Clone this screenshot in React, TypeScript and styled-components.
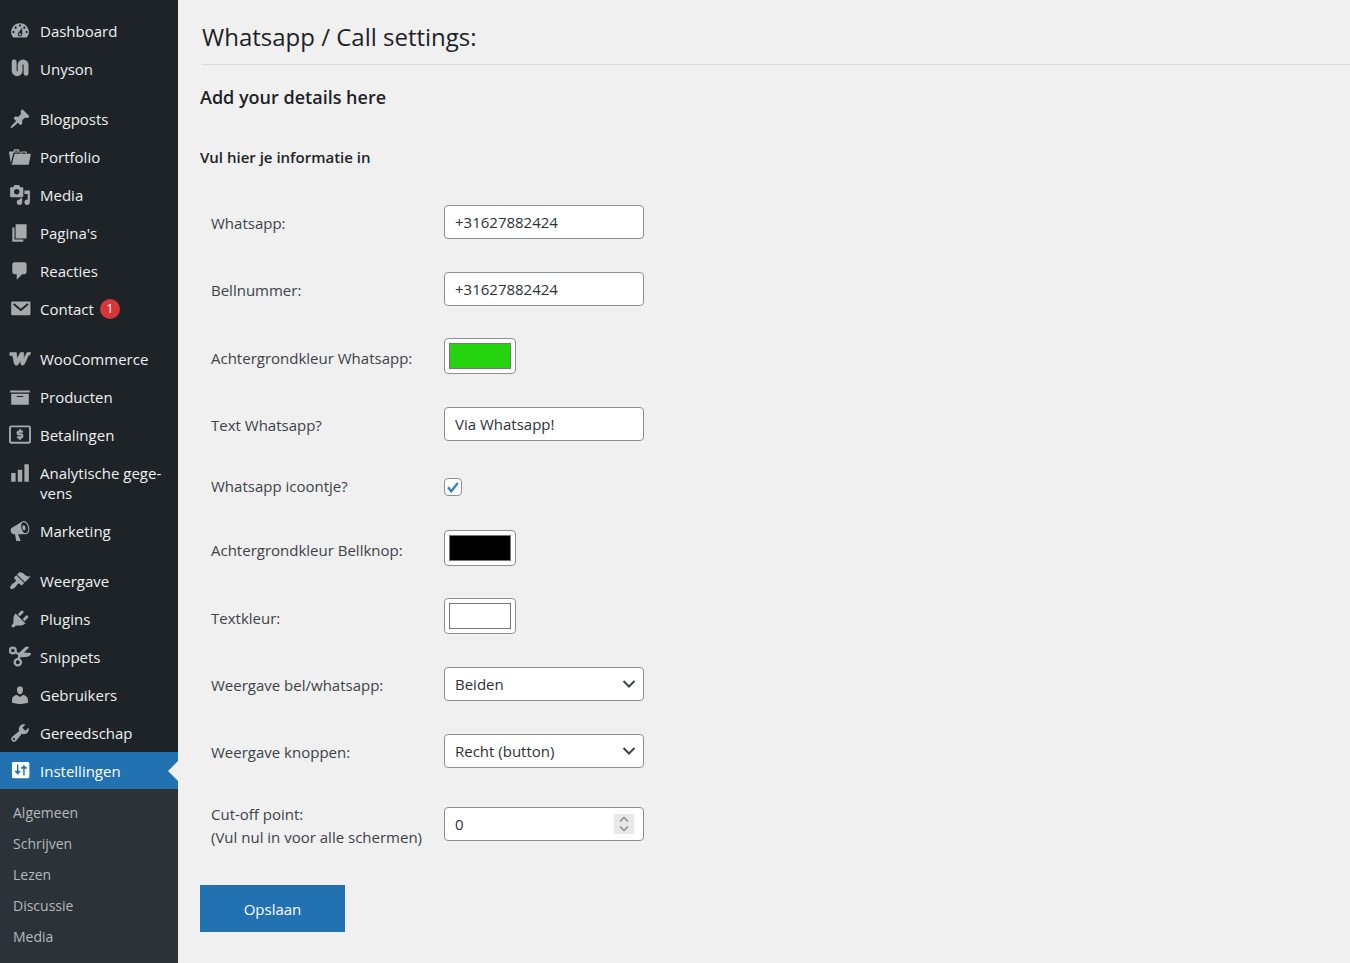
import React from "react";
import styled, { createGlobalStyle, css } from "styled-components";

const GlobalStyle = createGlobalStyle`
  *, *::before, *::after { box-sizing: border-box; }
  body {
    margin: 0;
    background: #f0f0f0;
    color: #3c434a;
    font-family: "Open Sans", "Noto Sans", sans-serif;
    font-size: 15px;
    line-height: 24px;
  }
  button, input, select { font: inherit; color: inherit; }
`;

const Shell = styled.div`
  display: flex;
  min-height: 100vh;
`;

const Sidebar = styled.nav`
  display: flex;
  flex-direction: column;
  flex: 0 0 178px;
  padding-top: 12px;
  background: #1d2327;
`;

const MenuGroup = styled.ul`
  list-style: none;
  margin: 0;
  padding: 0;

  & + & { margin-top: 12px; }
`;

const MenuLink = styled.a<{ $active?: boolean }>`
  position: relative;
  display: flex;
  gap: 9px;
  min-height: ${({ $active }) => ($active ? 37 : 38)}px;
  padding: 9px 8px 9px 9px;
  color: #f0f0f1;
  line-height: 20px;
  text-decoration: none;

  ${({ $active }) =>
    $active &&
    css`
      padding: 9px 8px 8px 9px;
      background: #2271b1;
      color: #fff;

      &::after {
        content: "";
        position: absolute;
        top: 50%;
        right: 0;
        margin-top: -10px;
        border: 10px solid transparent;
        border-left-width: 0;
        border-right-color: #f0f0f0;
      }
    `}
`;

const MenuIcon = styled.svg<{ $active?: boolean }>`
  flex: none;
  width: 22px;
  height: 22px;
  margin: -1px 0;
  fill: ${({ $active }) => ($active ? "#fff" : "#a7aaad")};
`;

const MenuLabel = styled.span`
  display: flex;
  align-items: flex-start;
  gap: 6px;
`;

const Badge = styled.span`
  width: 20px;
  border-radius: 10px;
  background: #d63638;
  color: #fff;
  font-size: 12px;
  text-align: center;
`;

const SubMenu = styled.ul`
  flex: 1;
  list-style: none;
  margin: 0;
  padding: 8px 0 4px;
  background: #2c3338;
`;

const SubLink = styled.a`
  display: block;
  padding: 5px 13px;
  color: #b4b9be;
  font-size: 14px;
  line-height: 21px;
  text-decoration: none;
`;

const Main = styled.main`
  flex: 1;
  min-width: 0;
  padding: 16px 0 31px 22px;
`;

const PageTitle = styled.h1`
  margin: 0 0 0 2px;
  padding: 4px 0 10px;
  border-bottom: 1px solid #dcdcde;
  color: #1d2327;
  font-size: 24px;
  font-weight: 400;
  line-height: 34px;
`;

const SectionTitle = styled.h2`
  margin: 20px 0 0;
  color: #1d2327;
  font-size: 18px;
  font-weight: 600;
  line-height: 24px;
`;

const SectionNote = styled.h3`
  margin: 36px 0 19px;
  color: #1d2327;
  font-size: 15px;
  font-weight: 600;
  line-height: 24px;
`;

const Label = styled.label`
  padding-top: 4px;
  line-height: 23px;
`;

const rowSizes = {
  text: css`min-height: 67px;`,
  color: css`min-height: 68px;`,
  check: css`
    min-height: 57px;
    padding-bottom: 13px;
    ${Label} { padding-top: 0; }
  `,
};

const Row = styled.div<{ $kind?: keyof typeof rowSizes }>`
  display: grid;
  grid-template-columns: 233px 1fr;
  align-items: center;
  padding: 15px 0 15px 11px;
  ${({ $kind = "text" }) => rowSizes[$kind]}
`;

const fieldBox = css`
  border: 1px solid #8c8f94;
  border-radius: 4px;
  background: #fff;
  color: #2c3338;
`;

const TextField = styled.input`
  ${fieldBox}
  display: block;
  width: 200px;
  height: 34px;
  padding: 0 10px;
`;

const ColorField = styled.input`
  ${fieldBox}
  display: block;
  width: 72px;
  height: 36px;
  padding: 0;

  &::-webkit-color-swatch-wrapper { padding: 4px; }
  &::-webkit-color-swatch { border: 1px solid #777; border-radius: 0; }
`;

const CheckWrap = styled.span`
  position: relative;
  width: 18px;
  height: 18px;

  svg {
    position: absolute;
    inset: 0;
    pointer-events: none;
  }
`;

const CheckField = styled.input`
  ${fieldBox}
  appearance: none;
  display: block;
  width: 18px;
  height: 18px;
  margin: 0;

  &:not(:checked) + svg { display: none; }
`;

const FieldWrap = styled.span`
  position: relative;
  width: 200px;
`;

const SelectField = styled.select`
  ${fieldBox}
  appearance: none;
  display: block;
  width: 200px;
  height: 34px;
  padding: 0 28px 0 10px;
`;

const NumberField = styled(TextField)`
  &::-webkit-inner-spin-button { opacity: 0; }
`;

const Chevron = styled.svg`
  position: absolute;
  top: 10px;
  right: 8px;
  width: 14px;
  height: 14px;
  pointer-events: none;
`;

const Stepper = styled.svg`
  position: absolute;
  top: 7px;
  right: 10px;
  width: 20px;
  height: 20px;
  background: #e9e9ea;
  pointer-events: none;
`;

const SaveButton = styled.button`
  width: 145px;
  height: 47px;
  margin-top: 21px;
  border: 0;
  background: #2271b1;
  color: #fff;
  cursor: pointer;
`;

const icons: Record<string, React.ReactNode> = {
  dashboard: (
    <path d="M3.76 16h12.48A7.998 7.998 0 0 0 10 3a7.998 7.998 0 0 0-6.24 13zM10 4c.55 0 1 .45 1 1s-.45 1-1 1-1-.45-1-1 .45-1 1-1zM6 6c.55 0 1 .45 1 1s-.45 1-1 1-1-.45-1-1 .45-1 1-1zm8 0c.55 0 1 .45 1 1s-.45 1-1 1-1-.45-1-1 .45-1 1-1zm-5.37 5.55L12 7v6c0 1.1-.9 2-2 2s-2-.9-2-2c0-.57.24-1.08.63-1.45zM4 10c.55 0 1 .45 1 1s-.45 1-1 1-1-.45-1-1 .45-1 1-1zm12 0c.55 0 1 .45 1 1s-.45 1-1 1-1-.45-1-1 .45-1 1-1zm-5 3c0-.55-.45-1-1-1s-1 .45-1 1 .45 1 1 1 1-.45 1-1z" />
  ),
  unyson: (
    <path
      d="M4.7 3.5V11.6a2.7 2.7 0 0 0 5.4 0V6.2a2.7 2.7 0 0 1 5.4 0V14"
      fill="none"
      stroke="#a7aaad"
      strokeWidth="4.4"
      strokeLinecap="round"
    />
  ),
  pin: (
    <path d="M10.44 3.02l1.82-1.82 6.36 6.35-1.83 1.82c-1.05-.68-2.48-.57-3.41.36l-.75.75c-.92.93-1.04 2.35-.35 3.41l-1.83 1.82-2.41-2.41-2.8 2.79c-.42.42-3.38 2.71-3.8 2.29s1.86-3.39 2.28-3.81l2.79-2.79L4.1 9.36l1.83-1.82c1.05.69 2.48.57 3.4-.36l.75-.75c.93-.92 1.05-2.35.36-3.41z" />
  ),
  portfolio: (
    <path d="M4 5H.78c-.37 0-.74.32-.69.84l1.56 9.99S3.5 8.47 3.86 6.7c.11-.53.61-.7.98-.7H10s-.7-2.08-.77-2.31C9.11 3.25 8.89 3 8.45 3H5.14c-.36 0-.7.23-.8.64C4.25 4.04 4 5 4 5zm4.88 0h-4s.42-1 .87-1h2.13c.48 0 1 1 1 1zM2.67 16.25c-.31.47-.76.75-1.26.75h15.73c.54 0 .92-.31 1.03-.83.44-2.19 1.68-8.44 1.68-8.44.07-.5-.3-.73-.62-.73H16V5.53c0-.16-.26-.53-.66-.53h-3.76c-.52 0-.87.58-.87.58L10 7H5.59c-.32 0-.63.19-.69.5 0 0-1.59 6.7-1.72 7.33-.07.37-.22.99-.51 1.42zM15.38 7H11s.58-1 1.13-1h2.29c.71 0 .96 1 .96 1z" />
  ),
  media: (
    <path d="M13 11V4c0-.55-.45-1-1-1h-1.67L9 1H5L3.67 3H2c-.55 0-1 .45-1 1v7c0 .55.45 1 1 1h10c.55 0 1-.45 1-1zM7 4.5c1.38 0 2.5 1.12 2.5 2.5S8.38 9.5 7 9.5 4.5 8.38 4.5 7 5.62 4.5 7 4.5zM14 6h5v10.5c0 1.38-1.12 2.5-2.5 2.5S14 17.88 14 16.5s1.12-2.5 2.5-2.5c.17 0 .34.02.5.05V9h-3V6zm-4 8.05V13h2v3.5c0 1.38-1.12 2.5-2.5 2.5S7 17.88 7 16.5 8.12 14 9.5 14c.17 0 .34.02.5.05z" />
  ),
  pages: <path d="M6 15V2h10v13H6zm-1 1h8v2H3V5h2v11z" />,
  comments: (
    <path d="M5 2h9c1.1 0 2 .9 2 2v7c0 1.1-.9 2-2 2h-2l-5 5v-5H5c-1.1 0-2-.9-2-2V4c0-1.1.9-2 2-2z" />
  ),
  mail: (
    <>
      <rect x="2" y="3.2" width="17.5" height="12.5" rx="1" />
      <path d="M4.3 5.5l6.45 5.4L17.2 5.5" fill="none" stroke="#1d2327" strokeWidth="1.7" />
    </>
  ),
  woo: (
    <path
      d="M0.8 4.2H6.6L7.4 9.8 10.4 4.2H13.2L13.6 9.6 16.4 4.2H19.8L18.9 6.4H17.8L14 14.6Q13.4 15.6 12.2 15.6 11 15.6 10.9 14.4L10.5 11.4 8.4 14.8Q7.8 15.6 6.6 15.6 5.2 15.6 4.9 14.4L3.3 6.8H0.8Z"
      stroke="#a7aaad"
      strokeWidth="0.6"
      strokeLinejoin="round"
    />
  ),
  archive: <path d="M19 4v2H1V4h18zM2 7h16v10H2V7zm11 3V9H7v1h6z" />,
  payments: (
    <>
      <rect x="0.9" y="2.2" width="18.2" height="14.8" rx="1" fill="none" stroke="#a7aaad" strokeWidth="1.7" />
      <path
        d="M12.7 6.9H9.2a1.3 1.3 0 0 0 0 2.6h1.6a1.3 1.3 0 0 1 0 2.6H7.3M10 4.8v2M10 12.2v2.2"
        fill="none"
        stroke="#a7aaad"
        strokeWidth="2"
      />
    </>
  ),
  chart: <path d="M18 18V2h-4v16h4zm-6 0V7H8v11h4zm-6 0v-8H2v8h4z" />,
  megaphone: (
    <path d="M18.15 5.94c.46 1.62.38 3.22-.02 4.48-.42 1.28-1.26 2.18-2.3 2.48-.16.06-.26.06-.4.06-.06.02-.12.02-.18.02-.06.02-.14.02-.22.02h-6.8l2.22 5.5c.02.14-.06.26-.14.34-.08.1-.24.16-.34.16H6.95c-.1 0-.26-.06-.34-.16-.08-.08-.16-.2-.14-.34l-1-5.5H4.25l-.02-.02c-.5.06-1.08-.18-1.54-.62s-.88-1.08-1.06-1.88c-.24-.8-.2-1.56-.02-2.2.18-.62.58-1.08 1.06-1.3l.02-.02 9-5.4c.1-.06.18-.1.24-.16.06-.04.14-.08.24-.12.16-.08.28-.12.5-.18 1.04-.3 2.24.1 3.22.98s1.84 2.24 2.26 3.86zm-2.58 5.98h-.02c.4-.1.74-.34 1.04-.7.58-.7.86-1.76.86-3.04 0-.64-.1-1.3-.28-1.98-.34-1.36-1.02-2.5-1.78-3.24s-1.68-1.1-2.46-.88c-.82.22-1.4.96-1.7 2-.32 1.04-.28 2.36.06 3.72.38 1.36 1 2.5 1.8 3.24.78.74 1.62 1.1 2.48.88zm-2.54-7.08c.22-.04.42-.02.62.04.38.16.76.48 1.02 1s.42 1.2.42 1.78c0 .3-.04.56-.12.8-.18.48-.44.84-.86.94-.34.1-.8-.06-1.14-.4s-.64-.86-.78-1.5c-.18-.62-.12-1.24.02-1.72s.48-.84.82-.94z" />
  ),
  brush: (
    <path d="M14.48 11.06L7.41 3.99l1.5-1.5c.5-.56 2.3-.47 3.51.32 1.21.8 1.43 1.28 2.91 2.1 1.18.64 2.45 1.26 4.45.85zm-.71.71L6.7 4.7 4.93 6.47c-.39.39-.39 1.02 0 1.41l1.06 1.06c.39.39.39 1.03 0 1.42-.6.6-1.43 1.11-2.21 1.69-.35.26-.7.53-1.01.84C1.43 14.23.4 16.08 1.4 17.07c.99 1 2.84-.03 4.18-1.36.31-.31.58-.66.85-1.02.57-.78 1.08-1.61 1.69-2.21.39-.39 1.02-.39 1.41 0l1.06 1.06c.39.39 1.02.39 1.41 0z" />
  ),
  plug: (
    <path d="M13.11 4.36L9.87 7.6 8 5.73l3.24-3.24c.35-.34 1.05-.2 1.56.32.52.51.66 1.21.31 1.55zm-8 1.77l.91-1.12 9.01 9.01-1.19.84c-.71.71-2.63 1.16-3.82 1.16H6.14L4.9 17.26c-.59.59-1.54.59-2.12 0-.59-.58-.59-1.53 0-2.12l1.24-1.24v-3.88c0-1.13.4-3.19 1.09-3.89zm7.26 3.97l3.24-3.24c.34-.35 1.04-.21 1.55.31.52.51.66 1.21.31 1.55l-3.24 3.25z" />
  ),
  scissors: (
    <>
      <g fill="none" stroke="#a7aaad" strokeWidth="2">
        <circle cx="3.5" cy="4.1" r="2.6" />
        <circle cx="8" cy="14.8" r="2.9" />
        <path d="M5.7 5.4l4 2.6M8.6 12.2L9.6 7.8" />
      </g>
      <path d="M8 7.2L14.8 1c1.2-1 2.6-.8 3.5.3L13.6 5.8l6.4.6c-.1 1.9-1.3 3.2-3 3.4L8.6 10.4z" />
    </>
  ),
  user: (
    <path d="M10 9.25c-2.27 0-2.73-3.44-2.73-3.44C7 4.02 7.82 2 9.97 2c2.16 0 2.98 2.02 2.71 3.81 0 0-.41 3.44-2.68 3.44zm0 2.57L12.72 10c2.39 0 4.52 2.33 4.52 4.53v2.49s-3.65 1.13-7.24 1.13c-3.65 0-7.24-1.13-7.24-1.13v-2.49c0-2.25 1.94-4.48 4.47-4.48z" />
  ),
  wrench: (
    <path d="M16.68 9.77c-1.34 1.34-3.3 1.67-4.95.99l-5.41 6.52c-.99.99-2.59.99-3.58 0s-.99-2.59 0-3.57l6.52-5.42c-.68-1.65-.35-3.61.99-4.95 1.28-1.28 3.12-1.62 4.72-1.06l-2.89 2.89 2.82 2.82 2.86-2.87c.53 1.58.18 3.39-1.08 4.65zM3.81 16.21c.4.39 1.04.39 1.43 0 .4-.4.4-1.04 0-1.43-.39-.4-1.03-.4-1.43 0-.39.39-.39 1.03 0 1.43z" />
  ),
  settings: (
    <>
      <rect x="2.7" y="1.8" width="15.8" height="14.9" rx="1.2" />
      <path
        d="M7.9 4.2v8.8M5.5 10.4h4.8M13.6 14V5.2M11 7.2h5.2"
        fill="none"
        stroke="#2271b1"
        strokeWidth="1.3"
      />
      <path d="M5.6 10.4h4.6L7.9 13.4zM11.2 7.2h4.8L13.6 4.6z" fill="#2271b1" />
    </>
  ),
};

type Item = { label: string; icon: string; badge?: number; active?: boolean };

const menu: Item[][] = [
  [
    { label: "Dashboard", icon: "dashboard" },
    { label: "Unyson", icon: "unyson" },
  ],
  [
    { label: "Blogposts", icon: "pin" },
    { label: "Portfolio", icon: "portfolio" },
    { label: "Media", icon: "media" },
    { label: "Pagina's", icon: "pages" },
    { label: "Reacties", icon: "comments" },
    { label: "Contact", icon: "mail", badge: 1 },
  ],
  [
    { label: "WooCommerce", icon: "woo" },
    { label: "Producten", icon: "archive" },
    { label: "Betalingen", icon: "payments" },
    { label: "Analytische gege\u00advens", icon: "chart" },
    { label: "Marketing", icon: "megaphone" },
  ],
  [
    { label: "Weergave", icon: "brush" },
    { label: "Plugins", icon: "plug" },
    { label: "Snippets", icon: "scissors" },
    { label: "Gebruikers", icon: "user" },
    { label: "Gereedschap", icon: "wrench" },
    { label: "Instellingen", icon: "settings", active: true },
  ],
];

const subMenu = ["Algemeen", "Schrijven", "Lezen", "Discussie", "Media"];

function Select({ id, options }: { id: string; options: string[] }) {
  return (
    <FieldWrap>
      <SelectField id={id}>
        {options.map((option) => (
          <option key={option}>{option}</option>
        ))}
      </SelectField>
      <Chevron viewBox="0 0 14 14" aria-hidden="true">
        <path d="M1.5 4l5.5 5.5L12.5 4" fill="none" stroke="#3c434a" strokeWidth="2" />
      </Chevron>
    </FieldWrap>
  );
}

export default function App() {
  return (
    <Shell lang="nl">
      <GlobalStyle />
      <Sidebar>
        {menu.map((group) => (
          <MenuGroup key={group[0].label}>
            {group.map(({ label, icon, badge, active }) => (
              <li key={label}>
                <MenuLink href="#" $active={active} aria-current={active ? "page" : undefined}>
                  <MenuIcon viewBox="0 0 20 20" $active={active} aria-hidden="true">
                    {icons[icon]}
                  </MenuIcon>
                  <MenuLabel>
                    {label}
                    {badge && <Badge>{badge}</Badge>}
                  </MenuLabel>
                </MenuLink>
              </li>
            ))}
          </MenuGroup>
        ))}
        <SubMenu>
          {subMenu.map((label) => (
            <li key={label}>
              <SubLink href="#">{label}</SubLink>
            </li>
          ))}
        </SubMenu>
      </Sidebar>
      <Main>
        <PageTitle>Whatsapp / Call settings:</PageTitle>
        <SectionTitle>Add your details here</SectionTitle>
        <SectionNote>Vul hier je informatie in</SectionNote>
        <form onSubmit={(event) => event.preventDefault()}>
          <Row>
            <Label htmlFor="whatsapp">Whatsapp:</Label>
            <TextField id="whatsapp" type="text" defaultValue="+31627882424" />
          </Row>
          <Row>
            <Label htmlFor="phone">Bellnummer:</Label>
            <TextField id="phone" type="text" defaultValue="+31627882424" />
          </Row>
          <Row $kind="color">
            <Label htmlFor="whatsapp-color">Achtergrondkleur Whatsapp:</Label>
            <ColorField id="whatsapp-color" type="color" defaultValue="#25d30f" />
          </Row>
          <Row>
            <Label htmlFor="whatsapp-text">Text Whatsapp?</Label>
            <TextField id="whatsapp-text" type="text" defaultValue="Via Whatsapp!" />
          </Row>
          <Row $kind="check">
            <Label htmlFor="whatsapp-icon">Whatsapp icoontje?</Label>
            <CheckWrap>
              <CheckField id="whatsapp-icon" type="checkbox" defaultChecked />
              <svg viewBox="0 0 18 18" width="18" height="18" aria-hidden="true">
                <path d="M4 9.3l3.3 4L13.8 5" fill="none" stroke="#3582c4" strokeWidth="2.4" />
              </svg>
            </CheckWrap>
          </Row>
          <Row $kind="color">
            <Label htmlFor="call-color">Achtergrondkleur Bellknop:</Label>
            <ColorField id="call-color" type="color" defaultValue="#000000" />
          </Row>
          <Row $kind="color">
            <Label htmlFor="text-color">Textkleur:</Label>
            <ColorField id="text-color" type="color" defaultValue="#ffffff" />
          </Row>
          <Row>
            <Label htmlFor="display">Weergave bel/whatsapp:</Label>
            <Select id="display" options={["Beiden", "Bellen", "Whatsapp"]} />
          </Row>
          <Row>
            <Label htmlFor="buttons">Weergave knoppen:</Label>
            <Select id="buttons" options={["Recht (button)", "Rond"]} />
          </Row>
          <Row>
            <Label htmlFor="cutoff">
              Cut-off point:
              <br />
              (Vul nul in voor alle schermen)
            </Label>
            <FieldWrap>
              <NumberField id="cutoff" type="number" defaultValue={0} />
              <Stepper viewBox="0 0 20 20" aria-hidden="true">
                <path d="M6 7.5l4-4 4 4M6 12.5l4 4 4-4" fill="none" stroke="#8a8a8a" strokeWidth="1.5" />
              </Stepper>
            </FieldWrap>
          </Row>
          <SaveButton type="submit">Opslaan</SaveButton>
        </form>
      </Main>
    </Shell>
  );
}
